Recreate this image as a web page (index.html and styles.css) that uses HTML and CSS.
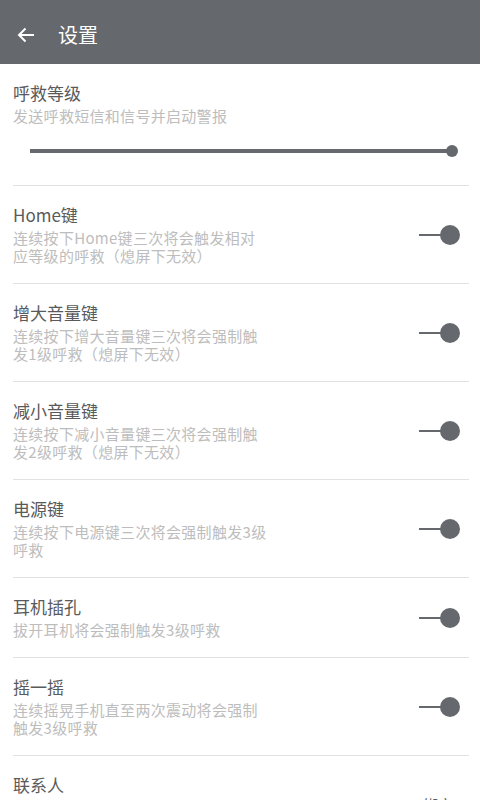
FILE: index.html
```html
<!DOCTYPE html>
<html>
<head>
    <meta charset="utf-8">
    <title>设置</title>
    <link rel="stylesheet" href="styles.css">
</head>
<body>
    <div class="toolbar">
        <svg class="back" width="18" height="16" viewBox="0 0 18 16">
            <path d="M17 8H2M8.5 1.5L2 8l6.5 6.5" fill="none" stroke="#fff" stroke-width="2"/>
        </svg>
        <span class="toolbar-title">设置</span>
    </div>

    <div class="list">
        <div class="item item-slider">
            <div class="item-title">呼救等级</div>
            <div class="item-sub">发送呼救短信和信号并启动警报</div>
            <div class="slider">
                <div class="slider-track"></div>
                <div class="slider-thumb"></div>
            </div>
        </div>

        <div class="item">
            <div class="item-text">
                <div class="item-title">Home键</div>
                <div class="item-sub">连续按下Home键三次将会触发相对应等级的呼救（熄屏下无效）</div>
            </div>
            <div class="switch"><span class="switch-track"></span><span class="switch-thumb"></span></div>
        </div>

        <div class="item">
            <div class="item-text">
                <div class="item-title">增大音量键</div>
                <div class="item-sub">连续按下增大音量键三次将会强制触发1级呼救（熄屏下无效）</div>
            </div>
            <div class="switch"><span class="switch-track"></span><span class="switch-thumb"></span></div>
        </div>

        <div class="item">
            <div class="item-text">
                <div class="item-title">减小音量键</div>
                <div class="item-sub">连续按下减小音量键三次将会强制触发2级呼救（熄屏下无效）</div>
            </div>
            <div class="switch"><span class="switch-track"></span><span class="switch-thumb"></span></div>
        </div>

        <div class="item">
            <div class="item-text">
                <div class="item-title">电源键</div>
                <div class="item-sub">连续按下电源键三次将会强制触发3级呼救</div>
            </div>
            <div class="switch"><span class="switch-track"></span><span class="switch-thumb"></span></div>
        </div>

        <div class="item">
            <div class="item-text">
                <div class="item-title">耳机插孔</div>
                <div class="item-sub">拔开耳机将会强制触发3级呼救</div>
            </div>
            <div class="switch"><span class="switch-track"></span><span class="switch-thumb"></span></div>
        </div>

        <div class="item">
            <div class="item-text">
                <div class="item-title">摇一摇</div>
                <div class="item-sub">连续摇晃手机直至两次震动将会强制触发3级呼救</div>
            </div>
            <div class="switch"><span class="switch-track"></span><span class="switch-thumb"></span></div>
        </div>

        <div class="item">
            <div class="item-text">
                <div class="item-title">联系人</div>
                <div class="item-sub">添加紧急联系人，触发呼救后将向其发送短信</div>
            </div>
            <div class="item-value">绑定</div>
        </div>
    </div>
</body>
</html>
```

FILE: styles.css
```css
body {
    margin: 0;
    font-family: "Noto Sans CJK SC", "Noto Sans", sans-serif;
    background: #fff;
}
.toolbar {
    height: 64px;
    background: #65696d;
    display: flex;
    align-items: center;
    padding: 6px 0 0 17px;
    box-sizing: border-box;
}
.back {
    display: block;
}
.toolbar-title {
    color: #fff;
    font-size: 20px;
    margin-left: 23px;
    line-height: 24px;
}
.list {
    margin: 0 11px 0 13px;
}
.item {
    display: flex;
    align-items: center;
    padding: 18px 0;
    border-bottom: 1px solid #e2e2e2;
}
.item-slider {
    display: block;
    padding-bottom: 28px;
}
.item-text {
    width: 256px;
    flex: none;
}
.item-title {
    font-size: 17px;
    line-height: 22px;
    color: #5a5a5a;
    margin-bottom: 3px;
}
.item-sub {
    font-size: 15px;
    line-height: 18px;
    letter-spacing: 0.3px;
    color: #bdbdbd;
}
.slider {
    position: relative;
    height: 12px;
    margin: 20px 0 0 17px;
    width: 428px;
}
.slider-track {
    position: absolute;
    left: 0;
    right: 6px;
    top: 4px;
    height: 4px;
    background: #65696d;
}
.slider-thumb {
    position: absolute;
    right: 0;
    top: 0;
    width: 12px;
    height: 12px;
    border-radius: 50%;
    background: #65696d;
}
.switch {
    margin-left: auto;
    margin-right: 9px;
    display: flex;
    align-items: center;
}
.switch-track {
    width: 22px;
    height: 2px;
    background: #65696d;
    margin-right: -1px;
}
.switch-thumb {
    width: 20px;
    height: 20px;
    border-radius: 50%;
    background: #65696d;
}
.item-value {
    margin-left: auto;
    margin-right: 16px;
    font-size: 15px;
    color: #595959;
}
```
